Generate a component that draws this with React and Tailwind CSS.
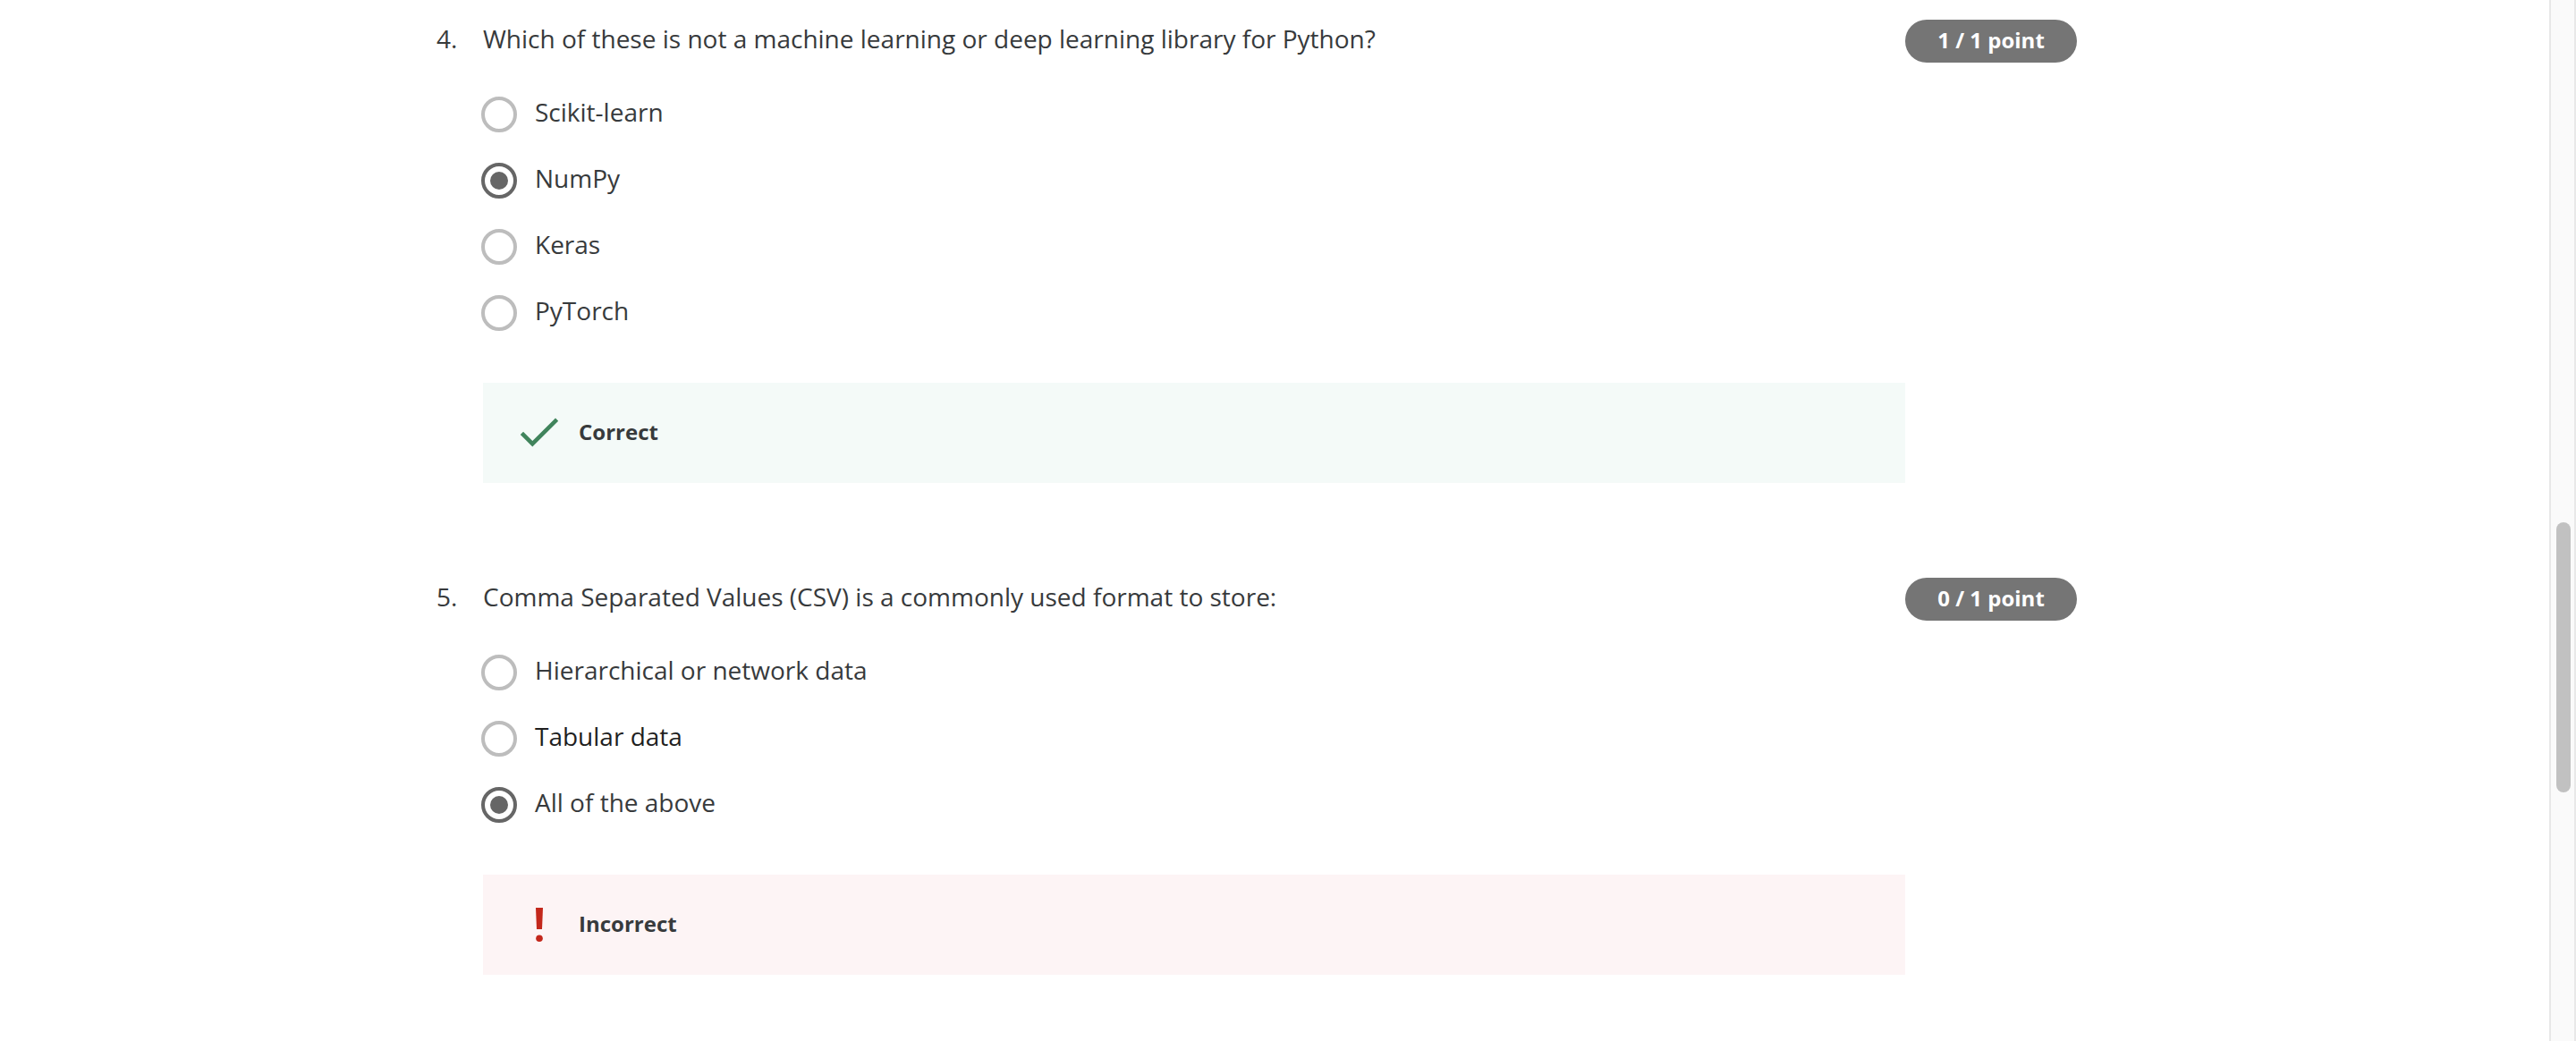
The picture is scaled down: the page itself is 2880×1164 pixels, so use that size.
const questions = [
  {
    number: 4,
    prompt: 'Which of these is not a machine learning or deep learning library for Python?',
    score: '1 / 1 point',
    correct: true,
    options: [
      { label: 'Scikit-learn' },
      { label: 'NumPy', selected: true },
      { label: 'Keras' },
      { label: 'PyTorch' },
    ],
  },
  {
    number: 5,
    prompt: 'Comma Separated Values (CSV) is a commonly used format to store:',
    score: '0 / 1 point',
    correct: false,
    options: [
      { label: 'Hierarchical or network data' },
      { label: 'Tabular data', hovered: true },
      { label: 'All of the above', selected: true },
    ],
  },
];

function CheckIcon() {
  return (
    <svg viewBox="0 0 48 48" className="size-12 shrink-0" fill="#40845c" aria-hidden="true">
      <polygon points="2.8,26 6,22.8 16.3,33 42,7.5 45.2,10.7 16.3,39.5" />
    </svg>
  );
}

function ExclamationIcon() {
  return (
    <svg viewBox="0 0 48 48" className="size-12 shrink-0" fill="#c3271b" aria-hidden="true">
      <polygon points="20,5 28,5 27,29 21,29" />
      <circle cx="24" cy="39.2" r="3.8" />
    </svg>
  );
}

function Option({ name, option }) {
  return (
    <label className={`flex items-start gap-5 ${option.hovered ? 'text-[#1f1f1f]' : ''}`}>
      <input
        type="radio"
        name={name}
        defaultChecked={option.selected}
        className="mt-1 size-10 shrink-0 appearance-none rounded-full border-4 border-[#bdbdbd] bg-clip-content p-1.5 checked:border-[#666666] checked:bg-[#666666]"
      />
      <span>{option.label}</span>
    </label>
  );
}

function Feedback({ correct }) {
  return (
    <div
      className={`mt-[58px] flex h-28 items-center gap-5 pl-[39px] text-[24px] font-bold ${
        correct ? 'bg-[#f4faf8]' : 'bg-[#fdf4f5]'
      }`}
    >
      {correct ? <CheckIcon /> : <ExclamationIcon />}
      <p className="pb-0.5">{correct ? 'Correct' : 'Incorrect'}</p>
    </div>
  );
}

function Question({ question }) {
  return (
    <section className="flex items-start">
      <span className="w-[52px] shrink-0">{question.number}.</span>
      <div className="min-w-0 flex-1">
        <h2>{question.prompt}</h2>
        <div className="-ml-0.5 mt-10 flex flex-col gap-[30px]">
          {question.options.map((option) => (
            <Option key={option.label} name={`question-${question.number}`} option={option} />
          ))}
        </div>
        <Feedback correct={question.correct} />
      </div>
      <span className="w-48 shrink-0 rounded-full bg-[#757575] pb-0.5 text-center text-[24px] leading-[46px] font-bold text-white">
        {question.score}
      </span>
    </section>
  );
}

export default function App() {
  return (
    <div className="flex min-h-screen bg-white font-['Open_Sans','Noto_Sans',sans-serif] text-[28px] leading-[42px] text-[#373a3c]">
      <main className="min-w-0 flex-1">
        <div className="mx-auto flex max-w-[1874px] flex-col gap-[106px] pt-[22px] pr-10">
          {questions.map((question) => (
            <Question key={question.number} question={question} />
          ))}
        </div>
      </main>
      <div className="w-[30px] shrink-0 border-x-2 border-[#e8e8e8] bg-[#fafafa] pt-[584px] pl-1.5">
        <div className="h-[302px] w-4 rounded-full bg-[#c1c1c1]" />
      </div>
    </div>
  );
}
